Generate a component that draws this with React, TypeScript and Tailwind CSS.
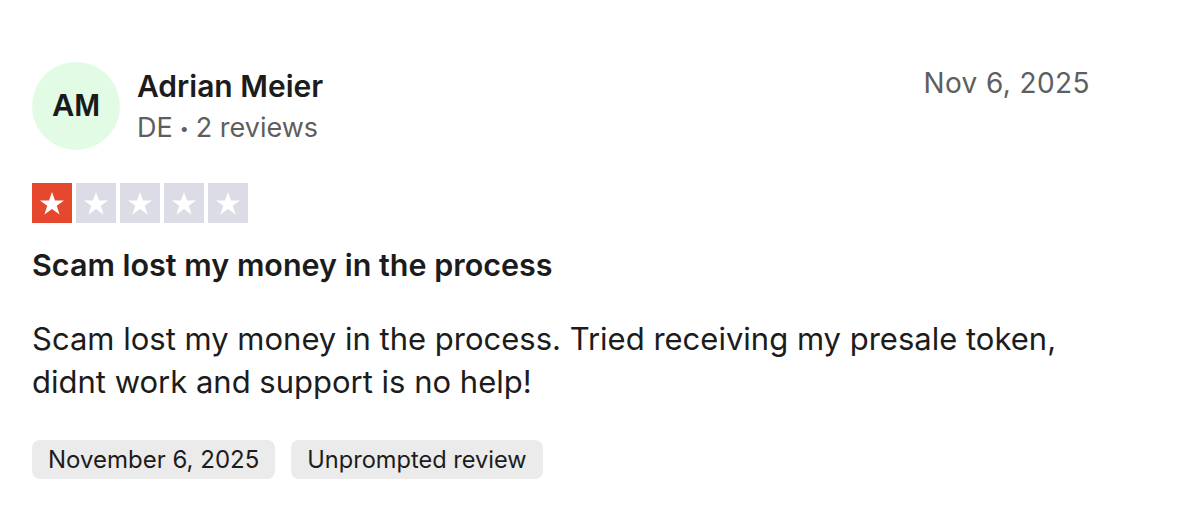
import React from 'react';

function Star({ filled }: { filled: boolean }) {
    return (
        <div className={`flex h-10 w-10 items-center justify-center ${filled ? 'bg-[#e5472f]' : 'bg-[#dcdce6]'}`}>
            <svg className="h-7 w-7" viewBox="0 0 24 24" fill="#ffffff">
                <path d="M12 2.5l2.6 7.3h7.7l-6.2 4.6 2.4 7.4L12 17.2l-6.5 4.6 2.4-7.4L1.7 9.8h7.7z" />
            </svg>
        </div>
    );
}

export default function App() {
    const rating = 1;

    return (
        <div className="min-h-screen w-full bg-white font-['Inter',sans-serif] text-[#1c1c1c]">
            <div className="w-[1090px] pl-8 pt-[62px]">
                {/* Header */}
                <div className="flex items-start justify-between">
                    <div className="flex items-center gap-[17px]">
                        <div className="flex h-[88px] w-[88px] items-center justify-center rounded-full bg-[#e1fbe5] font-['Liberation_Sans',sans-serif] text-[31px] font-bold text-[#1a1a1a]">
                            AM
                        </div>
                        <div className="flex flex-col pt-[2px]">
                            <span className="text-[30px] font-semibold leading-[40px]">Adrian Meier</span>
                            <span className="mt-[2px] flex items-center text-[27px] leading-[40px] text-[#5e5e5e]">
                                DE<span className="mx-[7px] text-[16px]">•</span>2 reviews
                            </span>
                        </div>
                    </div>
                    <span className="mt-[2px] text-[28px] leading-[38px] tracking-[0.4px] text-[#5e5e5e]">Nov 6, 2025</span>
                </div>

                {/* Stars */}
                <div className="mt-[33px] flex gap-1">
                    {[1, 2, 3, 4, 5].map((i) => (
                        <Star key={i} filled={i <= rating} />
                    ))}
                </div>

                {/* Title */}
                <h2 className="mt-[22px] text-[30.5px] font-semibold leading-[40px]">Scam lost my money in the process</h2>

                {/* Body */}
                <p className="mt-[32px] text-[31px] leading-[43px]">
                    Scam lost my money in the process. Tried receiving my presale token,
                    <br />
                    didnt work and support is no help!
                </p>

                {/* Tags */}
                <div className="mt-[37px] flex gap-4">
                    <span className="flex h-[39px] items-center rounded-lg bg-[#ebebeb] px-4 text-[24px]">November 6, 2025</span>
                    <span className="flex h-[39px] items-center rounded-lg bg-[#ebebeb] px-4 text-[23.6px]">Unprompted review</span>
                </div>
            </div>
        </div>
    );
}
